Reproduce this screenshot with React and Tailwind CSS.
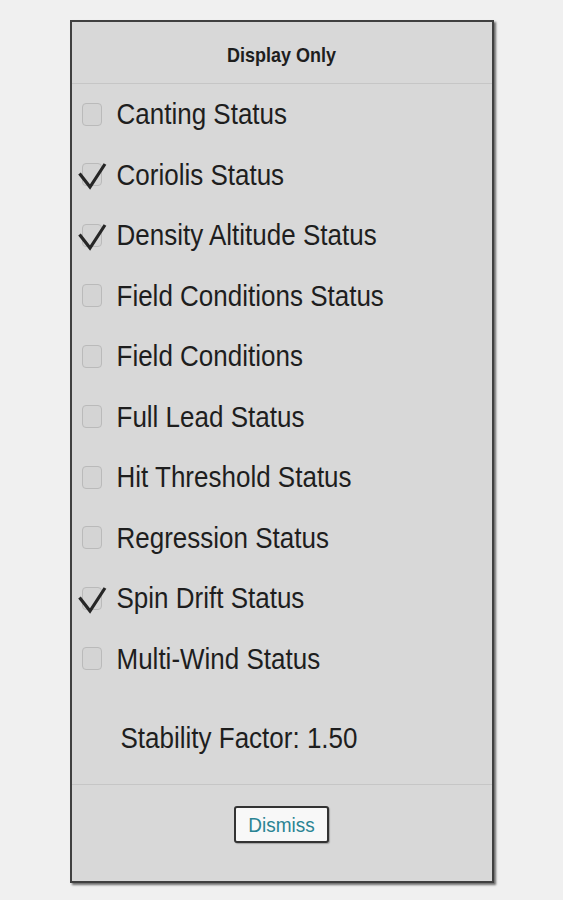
import React from "react";

const items = [
  { label: "Canting Status", checked: false },
  { label: "Coriolis Status", checked: true },
  { label: "Density Altitude Status", checked: true },
  { label: "Field Conditions Status", checked: false },
  { label: "Field Conditions", checked: false },
  { label: "Full Lead Status", checked: false },
  { label: "Hit Threshold Status", checked: false },
  { label: "Regression Status", checked: false },
  { label: "Spin Drift Status", checked: true },
  { label: "Multi-Wind Status", checked: false },
];

function Check({ checked }) {
  return (
    <div className="relative w-[20px] h-[23px] shrink-0 rounded-[4px] border border-[#bababa] bg-[#d4d4d4]">
      {checked && (
        <svg
          className="absolute left-[-6px] top-[-3px]"
          width="30"
          height="29"
          viewBox="0 0 30 29"
          fill="none"
        >
          <path
            d="M2.5 12.5 L13 26 L28 3"
            stroke="#262626"
            strokeWidth="3.2"
            strokeLinecap="butt"
            strokeLinejoin="miter"
          />
        </svg>
      )}
    </div>
  );
}

export default function App() {
  return (
    <div
      className="min-h-[900px] w-full bg-[#f0f0f0] pt-[20px]"
      style={{ fontFamily: '"Liberation Sans", Arial, sans-serif' }}
    >
      <div className="mx-auto flex h-[863px] w-[424px] flex-col border-2 border-[#404040] bg-[#d8d8d8] shadow-[2px_2px_2px_rgba(0,0,0,0.55)]">
        <div className="flex h-[62px] shrink-0 items-center justify-center border-b border-[#c6c6c6] pt-[6px] text-[18px] font-bold text-[#1e1e1e]">
          <span className="inline-block scale-y-[1.1]">Display Only</span>
        </div>
        <div className="flex flex-col">
          {items.map((it) => (
            <div key={it.label} className="flex h-[60.5px] items-center pl-[10px]">
              <Check checked={it.checked} />
              <span className="ml-[15px] inline-block scale-y-[1.12] text-[26px] leading-none text-[#1e1e1e]">
                {it.label}
              </span>
            </div>
          ))}
        </div>
        <div className="flex flex-1 items-center pl-[49px] pt-[2px]">
          <span className="inline-block scale-y-[1.12] text-[26px] leading-none text-[#1e1e1e]">
            Stability Factor: 1.50
          </span>
        </div>
        <div className="flex h-[97px] shrink-0 justify-center border-t border-[#c6c6c6] pt-[21px]">
          <button className="h-[37px] w-[95px] rounded-[3px] border-2 border-[#333] bg-[#f8f8f8] text-[19px] leading-none text-[#2a8494] shadow-[1px_1px_1px_rgba(0,0,0,0.25)]">
            <span className="inline-block scale-y-[1.1]">Dismiss</span>
          </button>
        </div>
      </div>
    </div>
  );
}
